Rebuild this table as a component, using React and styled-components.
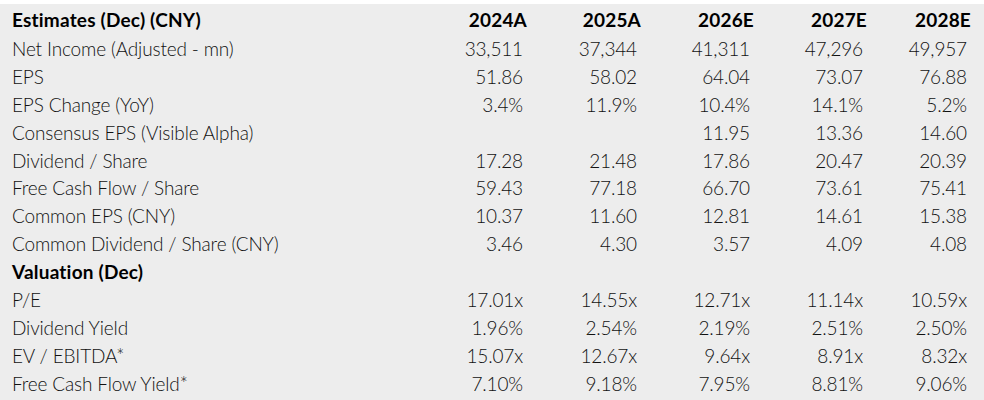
import React from "react";
import styled, { createGlobalStyle } from "styled-components";

const GlobalStyle = createGlobalStyle`
  html, body {
    margin: 0;
    padding: 0;
    background: #ffffff;
  }
`;

const Panel = styled.div`
  margin-top: 4px;
  height: 396px;
  padding-top: 1px;
  box-sizing: border-box;
  background-color: #ededed;
  font-family: Lato, "Liberation Sans", sans-serif;
  font-size: 19px;
  font-weight: 300;
  color: #111;
  overflow: hidden;
`;

const Row = styled.div`
  display: grid;
  grid-template-columns: 1fr 113px 114px 113px 113px 104px;
  align-items: center;
  height: ${(p) => (p.$head ? "30px" : "27.9px")};
  line-height: 28px;
  padding: 0 ${(p) => (p.$head ? "13px" : "17px")} 0 12px;
  font-weight: ${(p) => (p.$bold ? 700 : 300)};
  color: ${(p) => (p.$bold ? "#000" : "#111")};
  letter-spacing: ${(p) => (p.$bold ? "0.2px" : "-0.15px")};
  white-space: nowrap;
`;

const Label = styled.div`
  text-align: left;
`;

const Value = styled.div`
  text-align: right;
`;

const estimates = [
  ["Net Income (Adjusted - mn)", "33,511", "37,344", "41,311", "47,296", "49,957"],
  ["EPS", "51.86", "58.02", "64.04", "73.07", "76.88"],
  ["EPS Change (YoY)", "3.4%", "11.9%", "10.4%", "14.1%", "5.2%"],
  ["Consensus EPS (Visible Alpha)", "", "", "11.95", "13.36", "14.60"],
  ["Dividend / Share", "17.28", "21.48", "17.86", "20.47", "20.39"],
  ["Free Cash Flow / Share", "59.43", "77.18", "66.70", "73.61", "75.41"],
  ["Common EPS (CNY)", "10.37", "11.60", "12.81", "14.61", "15.38"],
  ["Common Dividend / Share (CNY)", "3.46", "4.30", "3.57", "4.09", "4.08"],
];

const valuation = [
  ["P/E", "17.01x", "14.55x", "12.71x", "11.14x", "10.59x"],
  ["Dividend Yield", "1.96%", "2.54%", "2.19%", "2.51%", "2.50%"],
  ["EV / EBITDA*", "15.07x", "12.67x", "9.64x", "8.91x", "8.32x"],
  ["Free Cash Flow Yield*", "7.10%", "9.18%", "7.95%", "8.81%", "9.06%"],
];

const years = ["2024A", "2025A", "2026E", "2027E", "2028E"];

const DataRow = ({ cells }) => (
  <Row>
    <Label>{cells[0]}</Label>
    {cells.slice(1).map((c, i) => (
      <Value key={i}>{c}</Value>
    ))}
  </Row>
);

const App = () => {
  return (
    <>
      <GlobalStyle />
      <Panel>
        <Row $head $bold>
          <Label>Estimates (Dec) (CNY)</Label>
          {years.map((y) => (
            <Value key={y}>{y}</Value>
          ))}
        </Row>
        {estimates.map((r) => (
          <DataRow key={r[0]} cells={r} />
        ))}
        <Row $bold>
          <Label>Valuation (Dec)</Label>
        </Row>
        {valuation.map((r) => (
          <DataRow key={r[0]} cells={r} />
        ))}
      </Panel>
    </>
  );
};

export default App;
